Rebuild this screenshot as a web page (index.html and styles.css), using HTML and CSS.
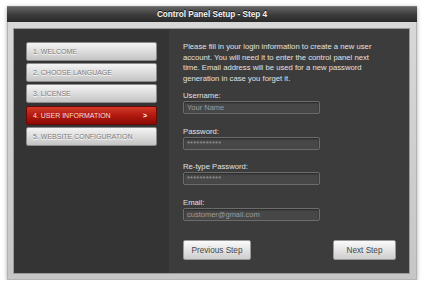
FILE: index.html
```html
<!DOCTYPE html>
<html lang="en">
<head>
  <meta charset="UTF-8">
  <meta name="viewport" content="width=device-width, initial-scale=1.0">
  <title>Control Panel Setup - Step 4</title>
  <link rel="stylesheet" href="styles.css">
</head>
<body>
  <main class="setup__window">
    <header class="setup__title">Control Panel Setup - Step 4</header>
    <div class="setup__frame">
      <div class="setup__body">
        <ul class="steps">
          <li class="step">1. WELCOME</li>
          <li class="step">2. CHOOSE LANGUAGE</li>
          <li class="step">3. LICENSE</li>
          <li class="step step--active">4. USER INFORMATION <span class="step__arrow">&gt;</span></li>
          <li class="step">5. WEBSITE CONFIGURATION</li>
        </ul>
        <form class="user__form">
          <p class="intro">Please fill in your login information to create a new user account. You will need it to enter the control panel next time. Email address will be used for a new password generation in case you forget it.</p>
          <label class="field">
            <span class="field__label">Username:</span>
            <input class="field__input" type="text" value="Your Name">
          </label>
          <label class="field">
            <span class="field__label">Password:</span>
            <input class="field__input field__input--stars" type="text" value="***********">
          </label>
          <label class="field">
            <span class="field__label">Re-type Password:</span>
            <input class="field__input field__input--stars" type="text" value="***********">
          </label>
          <label class="field">
            <span class="field__label">Email:</span>
            <input class="field__input" type="text" value="customer@gmail.com">
          </label>
          <div class="actions">
            <button class="btn btn--prev" type="button">Previous Step</button>
            <button class="btn btn--next" type="button">Next Step</button>
          </div>
        </form>
      </div>
    </div>
  </main>
</body>
</html>
```

FILE: styles.css
```css
:root {
  --panel-left: #343434;
  --panel-right: #3c3c3c;
  --frame: #cbcbcb;
  --label: #e2e2e2;
  --muted: #9c9c9c;
}
html {
  font-family: 'Liberation Sans', Arial, sans-serif;
}
body {
  margin: 0;
  background-color: #fff;
}
.setup__window {
  width: 410px;
  margin: 6px 0 0 7px;
  box-shadow: 0 1px 4px rgba(0, 0, 0, 0.35);
}
.setup__title {
  height: 16px;
  line-height: 16px;
  text-align: center;
  font-size: 8.2px;
  font-weight: 700;
  color: #f4f4f4;
  background: linear-gradient(#626262, #3a3a3a 55%, #2a2a2a);
  border-top: 1px solid #777;
  box-sizing: border-box;
  text-shadow: 0 -1px 0 #111;
}
.setup__frame {
  padding: 7px 7px 6px 6px;
  background: linear-gradient(#d8d8d8, #c6c6c6);
  border: 1px solid #b4b4b4;
  border-top: 0;
}
.setup__body {
  display: grid;
  grid-template-columns: 155px 1fr;
  height: 244px;
  box-shadow: 0 0 0 1px #9a9a9a;
}
.steps {
  margin: 0;
  padding: 13px 0 0 12px;
  list-style: none;
  background-color: var(--panel-left);
  display: flex;
  flex-direction: column;
  gap: 2.2px;
}
.step {
  width: 131px;
  height: 19px;
  box-sizing: border-box;
  padding: 0 9px 0 6px;
  display: flex;
  align-items: center;
  justify-content: space-between;
  font-size: 7px;
  color: #7c7c7c;
  background: linear-gradient(#f4f4f4, #dcdcdc 50%, #c4c4c4);
  border: 1px solid #8c8c8c;
  border-radius: 2px;
  text-shadow: 0 1px 0 #fff;
}
.step--active {
  color: #f6dcdc;
  background: linear-gradient(#d23a28, #b2190f 50%, #8c0b05);
  border-color: #6a0804;
  text-shadow: none;
}
.step__arrow {
  font-weight: 700;
  color: #fff;
  font-size: 7px;
}
.user__form {
  margin: 0;
  padding: 13px 13px 0 14px;
  background-color: var(--panel-right);
  display: flex;
  flex-direction: column;
}
.intro {
  width: 200px;
  margin: 0 0 6px;
  font-size: 7.7px;
  line-height: 10.5px;
  color: var(--label);
}
.field {
  display: flex;
  flex-direction: column;
  margin-bottom: 11.5px;
}
.field__label {
  font-size: 7.7px;
  line-height: 11px;
  color: var(--label);
}
.field__input {
  width: 137px;
  height: 13px;
  box-sizing: border-box;
  margin: 0;
  padding: 0 3px;
  font-family: inherit;
  font-size: 7.5px;
  color: var(--muted);
  background-color: #474747;
  border: 1px solid #6c6c6c;
  border-radius: 2px;
  box-shadow: inset 0 1px 2px rgba(0, 0, 0, 0.45);
  outline: none;
}
.field__input--stars {
  font-size: 7.5px;
  letter-spacing: 0.2px;
}
.actions {
  display: flex;
  justify-content: space-between;
  margin-top: 8px;
}
.btn {
  height: 20px;
  padding: 0;
  font-family: inherit;
  font-size: 8.2px;
  color: #474747;
  background: linear-gradient(#fafafa, #e4e4e4 50%, #cdcdcd);
  border: 1px solid #9a9a9a;
  border-radius: 2px;
}
.btn--prev {
  width: 68px;
}
.btn--next {
  width: 63px;
}
```
